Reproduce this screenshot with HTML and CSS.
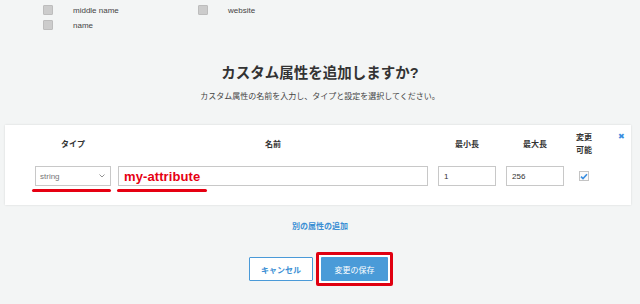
FILE: index.html
```html
<!DOCTYPE html>
<html lang="ja">
<head>
<meta charset="utf-8">
<link rel="stylesheet" href="styles.css">
</head>
<body>
<div class="fields">
  <div class="field"><span class="cb"></span><span>middle name</span></div>
  <div class="field"><span class="cb"></span><span>website</span></div>
  <div class="field"><span class="cb"></span><span>name</span></div>
</div>

<h1 class="title">カスタム属性を追加しますか?</h1>
<p class="subtitle">カスタム属性の名前を入力し、タイプと設定を選択してください。</p>

<div class="card">
  <span class="close">✖</span>
  <div class="grid">
    <div class="head w-select">タイプ</div>
    <div class="head w-name">名前</div>
    <div class="head w-num">最小長</div>
    <div class="head w-num">最大長</div>
    <div class="head w-check">変更<br>可能</div>

    <div class="select w-select"><span>string</span>
      <svg class="chev" width="6" height="4" viewBox="0 0 6 4"><path d="M0.5 0.5 L3 3 L5.5 0.5" fill="none" stroke="#888" stroke-width="0.9"/></svg>
    </div>
    <div class="input w-name name-val">my-attribute</div>
    <div class="input w-num">1</div>
    <div class="input w-num">256</div>
    <div class="check-cell w-check">
      <span class="checkbox">
        <svg width="8" height="7" viewBox="0 0 8 7"><path d="M1 3.6 L3 5.6 L7 1.2" fill="none" stroke="#3a8ee0" stroke-width="1.6"/></svg>
      </span>
    </div>

    <div class="mark mark-select"></div>
    <div class="mark mark-name"></div>
  </div>
</div>

<div class="add-link">別の属性の追加</div>

<div class="actions">
  <button class="btn btn-cancel">キャンセル</button>
  <div class="highlight"><button class="btn btn-save">変更の保存</button></div>
</div>
</body>
</html>
```

FILE: styles.css
```css
* { box-sizing: border-box; }
body {
  margin: 0;
  background: #f3f5f5;
  font-family: "Liberation Sans", "Noto Sans CJK JP", sans-serif;
  color: #333;
  width: 640px;
  height: 304px;
  overflow: hidden;
}
.fields {
  display: grid;
  grid-template-columns: 155px auto;
  row-gap: 5px;
  padding: 5px 0 0 43px;
}
.field {
  display: flex;
  align-items: center;
  gap: 20px;
  height: 10px;
  font-size: 8px;
  color: #444;
}
.cb {
  width: 10px;
  height: 10px;
  background: #ccc;
  border: 1px solid #bdbdbd;
  border-radius: 1px;
}
.title {
  margin: 33px 0 0;
  text-align: center;
  font-size: 14.5px;
  line-height: 20px;
  font-weight: bold;
  color: #333;
}
.subtitle {
  margin: 8px 0 0;
  text-align: center;
  font-size: 8px;
  line-height: 12px;
  color: #444;
}
.card {
  position: relative;
  margin: 22px 9px 0 5px;
  height: 80px;
  background: #fff;
  box-shadow: 0 0 2px rgba(0,0,0,0.12);
  padding: 6px 0 0 30px;
}
.close {
  position: absolute;
  top: 7px;
  right: 6px;
  font-size: 8px;
  color: #3a8ee0;
  line-height: 10px;
}
.grid {
  display: grid;
  grid-template-columns: 83px 320px 68px 66px 24px;
  grid-template-rows: 26px 29px 6px;
  align-items: center;
}
.select, .input, .check-cell { align-self: end; }
.w-select { width: 76px; }
.w-name { width: 310px; }
.w-num { width: 58px; }
.w-check { width: 24px; }
.head {
  text-align: center;
  font-size: 8px;
  line-height: 13px;
  font-weight: bold;
  color: #333;
}
.select {
  height: 20px;
  border: 1px solid #c8c8c8;
  display: flex;
  align-items: center;
  justify-content: space-between;
  padding: 0 5px 0 4px;
  font-size: 8px;
  color: #777;
}
.input {
  height: 20px;
  border: 1px solid #c8c8c8;
  display: flex;
  align-items: center;
  padding: 0 5px;
  font-size: 8px;
  color: #333;
}
.name-val {
  font-size: 13px;
  font-weight: bold;
  color: #e60012;
  padding-left: 5px;
  letter-spacing: 0.1px;
}
.check-cell {
  height: 20px;
  display: flex;
  align-items: center;
  justify-content: center;
}
.checkbox {
  width: 10px;
  height: 10px;
  border: 1px solid #c4c4c4;
  background: #fafafa;
  display: flex;
  align-items: center;
  justify-content: center;
}
.mark {
  height: 3px;
  background: #e60012;
  border-radius: 2px;
  align-self: end;
}
.mark-select { width: 79px; margin-left: -3px; }
.mark-name { width: 90px; margin-left: -1px; }
.add-link {
  margin-top: 16px;
  text-align: center;
  font-size: 8px;
  line-height: 12px;
  font-weight: bold;
  color: #3b8fd4;
}
.actions {
  margin-top: 19px;
  display: flex;
  justify-content: center;
  align-items: center;
  gap: 3px;
  padding-left: 2px;
}
.btn {
  height: 24px;
  font-family: "Liberation Sans", "Noto Sans CJK JP", sans-serif;
  font-size: 8px;
  font-weight: bold;
  border-radius: 1px;
  padding: 0;
  display: flex;
  align-items: center;
  justify-content: center;
}
.btn-cancel {
  width: 64px;
  background: #fff;
  border: 1px solid #4a9ad8;
  color: #3b8fd4;
}
.btn-save {
  width: 67px;
  background: #4a9bd8;
  border: none;
  color: #fff;
  font-weight: normal;
}
.highlight {
  border: 3px solid #e00010;
  border-radius: 2px;
  padding: 2px;
  background: #fff;
}
```
